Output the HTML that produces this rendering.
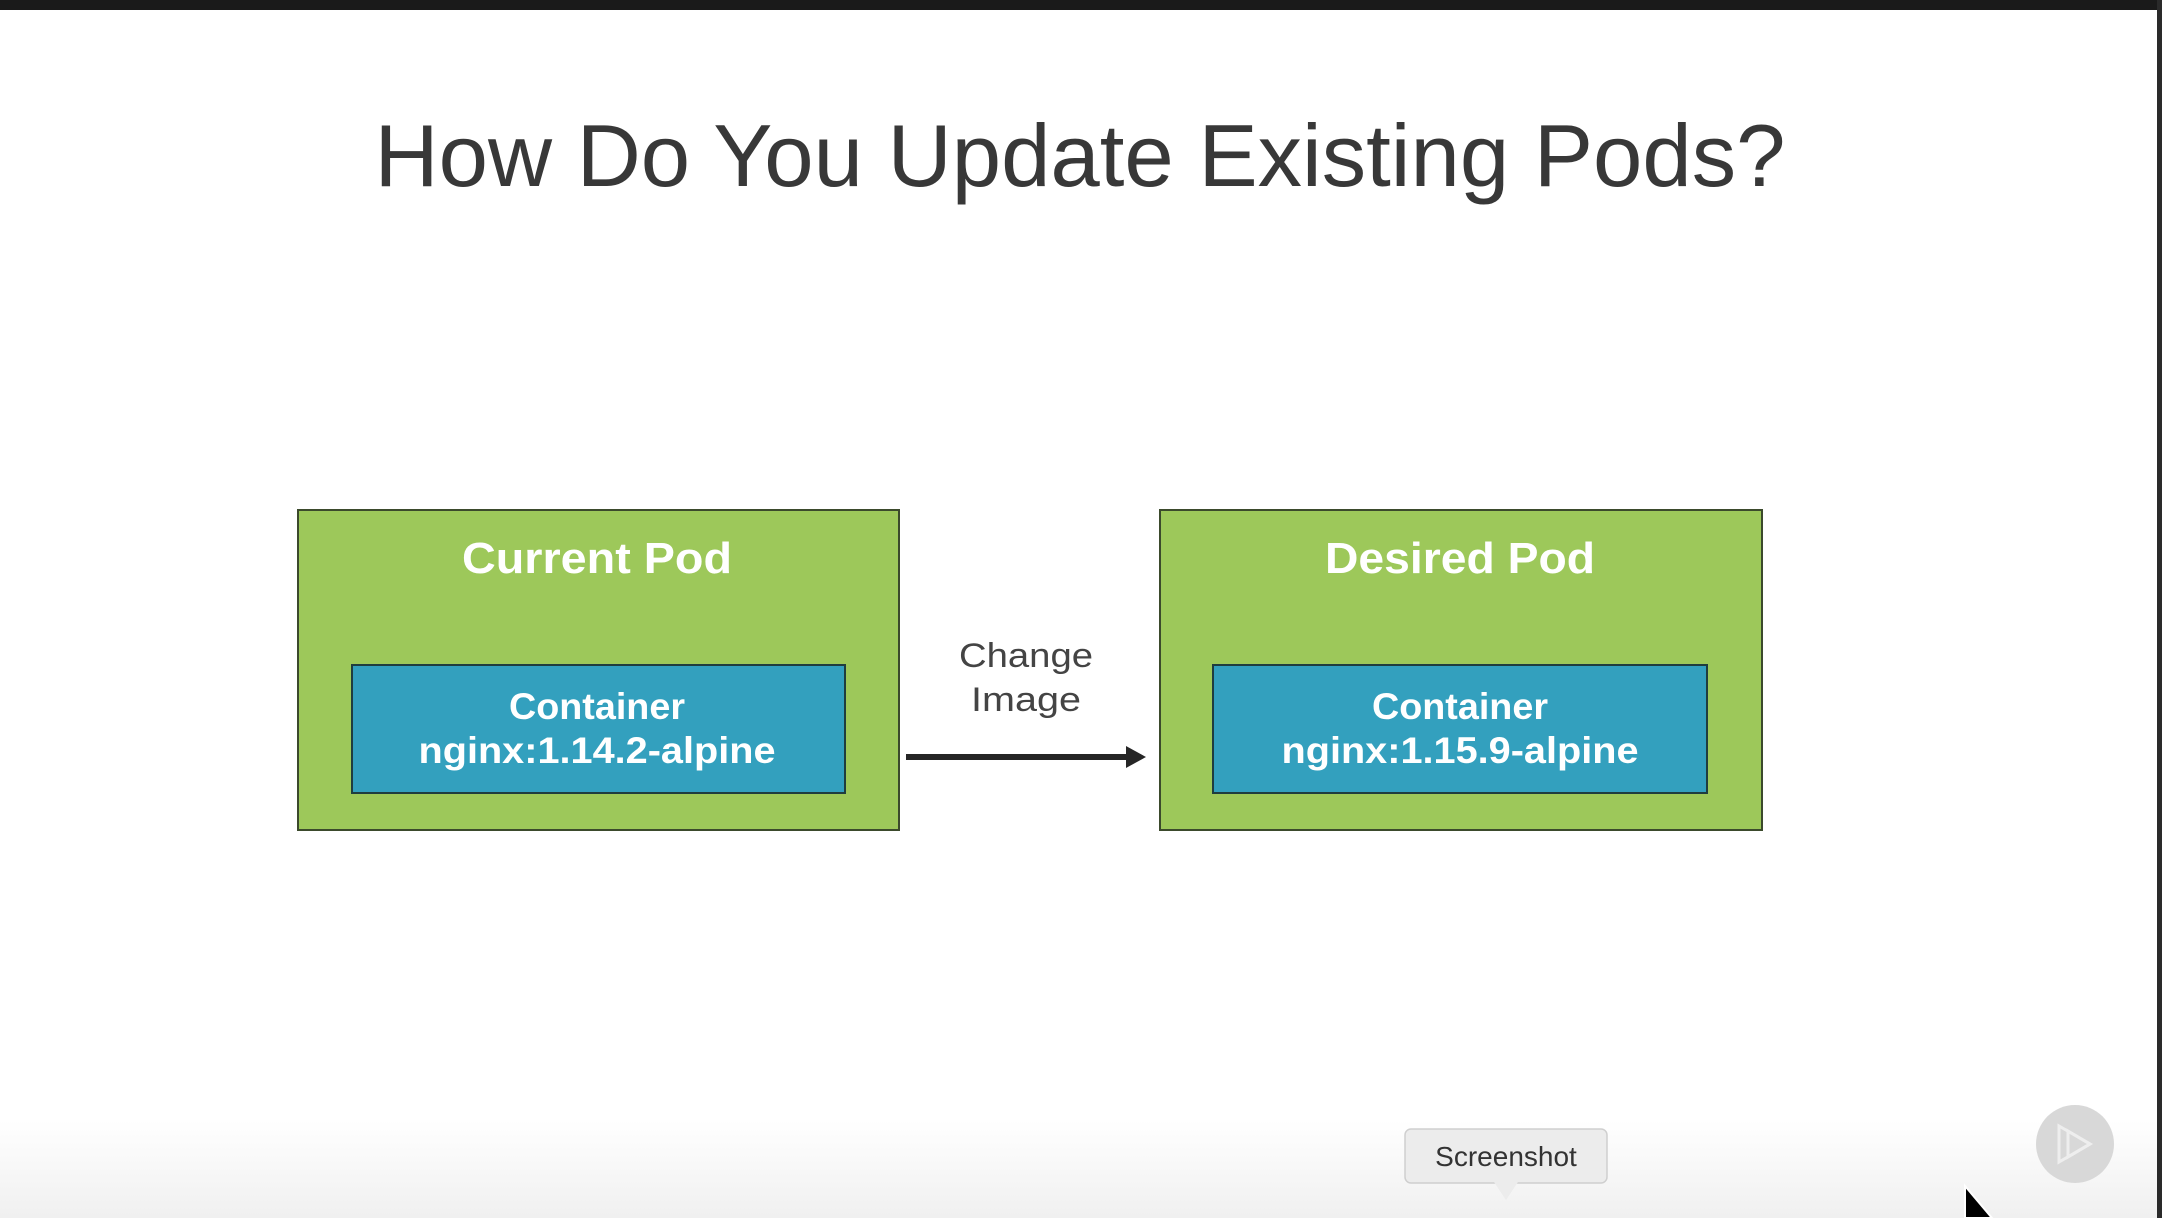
<!DOCTYPE html>
<html><head><meta charset="utf-8"><style>
html,body{margin:0;padding:0;background:#fff;}
body{width:2162px;height:1218px;overflow:hidden;position:relative;}
</style></head><body>
<svg width="2162" height="1218" viewBox="0 0 2162 1218" xmlns="http://www.w3.org/2000/svg" style="position:absolute;left:0;top:0">
<defs>
<linearGradient id="bg" x1="0" y1="0" x2="0" y2="1">
<stop offset="0" stop-color="#fff"/><stop offset="1" stop-color="#f0f0f0"/>
</linearGradient>
</defs>
<rect x="0" y="0" width="2162" height="1218" fill="#fff"/>
<rect x="0" y="1120" width="2158" height="98" fill="url(#bg)"/>
<rect x="0" y="0" width="2162" height="10" fill="#1a1a1a"/>
<rect x="2157" y="0" width="5" height="1218" fill="#2a2a2a"/>
<text x="1080" y="186" text-anchor="middle" font-family="Liberation Sans, sans-serif" font-size="88" fill="#383838" textLength="1411" lengthAdjust="spacingAndGlyphs">How Do You Update Existing Pods?</text>

<rect x="298" y="510" width="601" height="320" fill="#9dc85a" stroke="#3b4a2c" stroke-width="2"/>
<rect x="352" y="665" width="493" height="128" fill="#33a0be" stroke="#1f3d3f" stroke-width="2"/>
<text x="597" y="573" text-anchor="middle" font-family="Liberation Sans, sans-serif" font-weight="bold" font-size="44" fill="#fff" textLength="270" lengthAdjust="spacingAndGlyphs">Current Pod</text>
<text x="597" y="719" text-anchor="middle" font-family="Liberation Sans, sans-serif" font-weight="bold" font-size="37" fill="#fff" textLength="176" lengthAdjust="spacingAndGlyphs">Container</text>
<text x="597" y="763" text-anchor="middle" font-family="Liberation Sans, sans-serif" font-weight="bold" font-size="37" fill="#fff" textLength="357" lengthAdjust="spacingAndGlyphs">nginx:1.14.2-alpine</text>

<rect x="1160" y="510" width="602" height="320" fill="#9dc85a" stroke="#3b4a2c" stroke-width="2"/>
<rect x="1213" y="665" width="494" height="128" fill="#33a0be" stroke="#1f3d3f" stroke-width="2"/>
<text x="1460" y="573" text-anchor="middle" font-family="Liberation Sans, sans-serif" font-weight="bold" font-size="44" fill="#fff" textLength="270" lengthAdjust="spacingAndGlyphs">Desired Pod</text>
<text x="1460" y="719" text-anchor="middle" font-family="Liberation Sans, sans-serif" font-weight="bold" font-size="37" fill="#fff" textLength="176" lengthAdjust="spacingAndGlyphs">Container</text>
<text x="1460" y="763" text-anchor="middle" font-family="Liberation Sans, sans-serif" font-weight="bold" font-size="37" fill="#fff" textLength="357" lengthAdjust="spacingAndGlyphs">nginx:1.15.9-alpine</text>

<text x="1026" y="667" text-anchor="middle" font-family="Liberation Sans, sans-serif" font-size="34" fill="#444" textLength="134" lengthAdjust="spacingAndGlyphs">Change</text>
<text x="1026" y="711" text-anchor="middle" font-family="Liberation Sans, sans-serif" font-size="34" fill="#444" textLength="110" lengthAdjust="spacingAndGlyphs">Image</text>
<rect x="906" y="754" width="222" height="6" fill="#262626"/>
<polygon points="1126,746 1146,757 1126,768" fill="#262626"/>

<rect x="1405" y="1129" width="202" height="54" rx="6" fill="#ececec" stroke="#cfcfcf" stroke-width="1.5"/>
<polygon points="1494,1182 1518,1182 1506,1200" fill="#ececec"/>
<text x="1506" y="1166" text-anchor="middle" font-family="Liberation Sans, sans-serif" font-size="28" fill="#333">Screenshot</text>

<ellipse cx="2075" cy="1144" rx="39" ry="39" fill="#d8d8d8"/>
<polygon points="2059,1126 2090,1144 2059,1162" fill="none" stroke="#eee" stroke-width="3"/>
<polygon points="2068,1131 2090,1144 2068,1157" fill="none" stroke="#eee" stroke-width="3"/>

<polygon points="1965,1186 1965,1218 1992,1218" fill="#000" stroke="#fff" stroke-width="2"/>
</svg>
</body></html>
